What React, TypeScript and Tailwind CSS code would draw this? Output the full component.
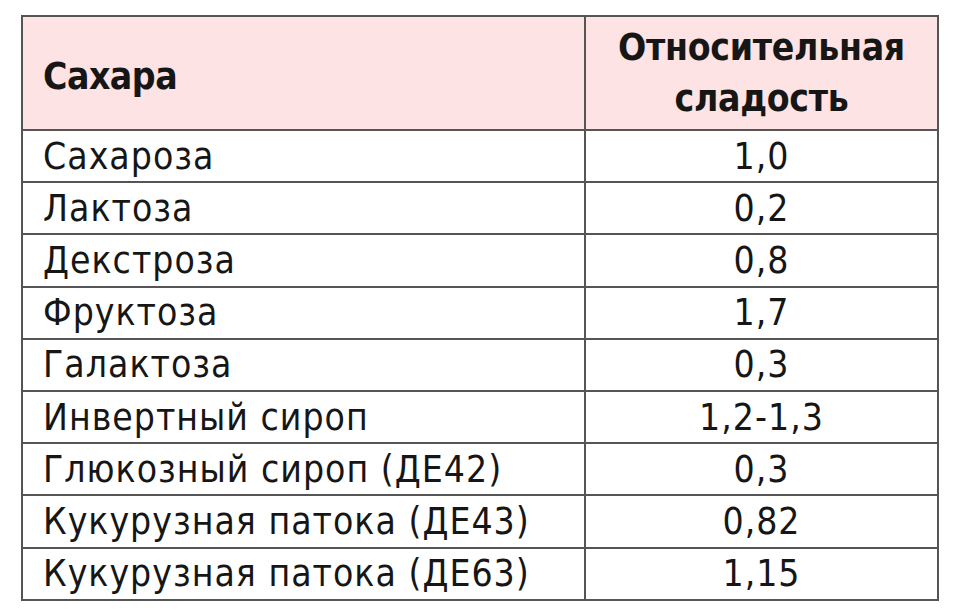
import React from "react";

const rows: [string, string][] = [
  ["Сахароза", "1,0"],
  ["Лактоза", "0,2"],
  ["Декстроза", "0,8"],
  ["Фруктоза", "1,7"],
  ["Галактоза", "0,3"],
  ["Инвертный сироп", "1,2-1,3"],
  ["Глюкозный сироп (ДЕ42)", "0,3"],
  ["Кукурузная патока (ДЕ43)", "0,82"],
  ["Кукурузная патока (ДЕ63)", "1,15"],
];

export default function App() {
  return (
    <div className="w-[960px] h-[613px] bg-white pt-[15px] pl-[21px] text-[#161616] font-['DejaVu_Sans_Condensed',sans-serif]">
      <div className="w-[918px] border-2 border-[#555555] flex flex-col">
        <div className="h-[112px] bg-[#fde3e3] grid grid-cols-[561px_1fr]">
          <div className="flex items-center pl-[20px] pt-[8px] text-[37px] font-bold tracking-[-0.5px]">Сахара</div>
          <div className="border-l-2 border-[#555555] flex flex-col items-center justify-center text-[37px] font-bold leading-[51px] tracking-[-0.3px]">
            <span>Относительная</span>
            <span>сладость</span>
          </div>
        </div>
        {rows.map(([name, val]) => (
          <div key={name} className="h-[52.2px] border-t-2 border-[#555555] grid grid-cols-[561px_1fr]">
            <div className="flex items-center pl-[20px] text-[37px] tracking-[1px] leading-none">{name}</div>
            <div className="border-l-2 border-[#555555] flex items-center justify-center text-[37px] tracking-[1px] leading-none">{val}</div>
          </div>
        ))}
      </div>
    </div>
  );
}
